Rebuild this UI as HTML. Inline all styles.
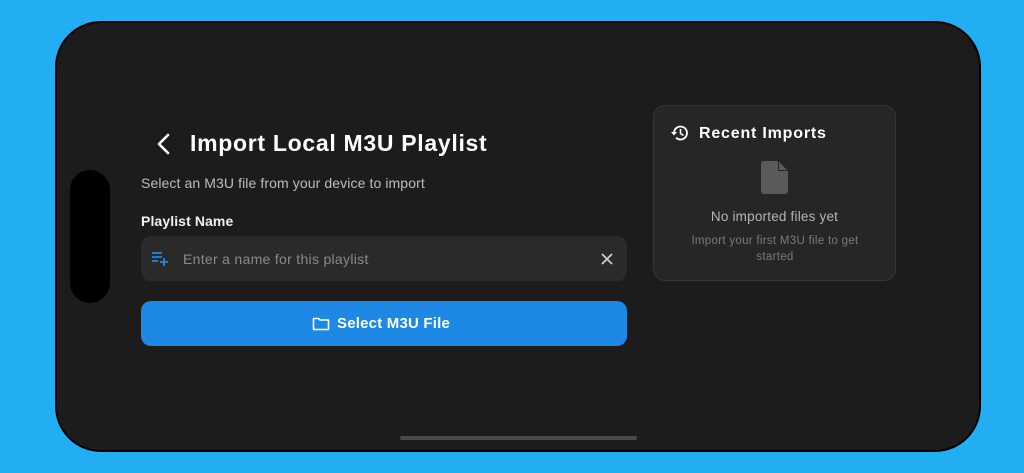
<!DOCTYPE html>
<html><head><style>
*{margin:0;padding:0;box-sizing:border-box}
body{width:1024px;height:473px;background:#21aef2;position:relative;overflow:hidden;font-family:"Liberation Sans",sans-serif}
.phone{position:absolute;left:55px;top:21px;width:926px;height:431px;background:#1c1c1c;border:2px solid #000;border-radius:46px}
.notch{position:absolute;left:70px;top:170px;width:40px;height:133px;background:#000;border-radius:20px}
.home{position:absolute;left:400px;top:436px;width:237px;height:4px;background:#4a4a4a;border-radius:2px}
.t{position:absolute;white-space:nowrap}
.input{position:absolute;left:141px;top:236px;width:486px;height:45px;background:#2a2a2a;border-radius:10px}
.btn{position:absolute;left:141px;top:301px;width:486px;height:45px;background:#1e88e5;border-radius:10px}
.card{position:absolute;left:653px;top:105px;width:243px;height:176px;background:#262626;border:1px solid #363636;border-radius:12px}
</style></head><body>
<div class="phone"></div>
<div class="notch"></div>
<div class="home"></div>
<svg class="t" style="left:154px;top:133px" width="20" height="22" viewBox="0 0 20 22"><path d="M14 2 L5 11 L14 20" stroke="#fff" stroke-width="2.6" fill="none" stroke-linecap="round" stroke-linejoin="round"/></svg>
<div class="t" style="left:190px;top:130px;font-size:23px;font-weight:bold;color:#fff;letter-spacing:0.7px">Import Local M3U Playlist</div>
<div class="t" style="left:141px;top:175px;font-size:14px;color:#bdbdbd;letter-spacing:0.1px">Select an M3U file from your device to import</div>
<div class="t" style="left:141px;top:213px;font-size:14px;color:#f0f0f0;font-weight:bold;letter-spacing:0.1px">Playlist Name</div>
<div class="input"></div>
<svg class="t" style="left:151px;top:251px" width="18" height="16" viewBox="0 0 18 16"><path d="M1 2h10M1 6h10M1 10h6M13 7v8M9 11h8" stroke="#1e88e5" stroke-width="1.8" fill="none"/></svg>
<div class="t" style="left:183px;top:251px;font-size:14px;color:#8a8a8a;letter-spacing:0.3px">Enter a name for this playlist</div>
<svg class="t" style="left:600px;top:252px" width="14" height="14" viewBox="0 0 14 14"><path d="M2 2L12 12M12 2L2 12" stroke="#ccc" stroke-width="1.8"/></svg>
<div class="btn"></div>
<svg class="t" style="left:312px;top:316px" width="18" height="15" viewBox="0 0 18 15"><path d="M1.5 2.5h5l1.5 1.5h8.5v9.5h-15z" stroke="#fff" stroke-width="1.6" fill="none" stroke-linejoin="round"/></svg>
<div class="t" style="left:337px;top:315px;font-size:15px;color:#fff;font-weight:bold;letter-spacing:0.2px">Select M3U File</div>
<div class="card"></div>
<svg class="t" style="left:670px;top:124px" width="19" height="18" viewBox="0 0 19 18"><path d="M4 9a6.5 6.5 0 1 1 2 4.7" stroke="#fff" stroke-width="1.8" fill="none"/><path d="M1 8l3 3.5 3-3.5z" fill="#fff"/><path d="M10.5 5v4.5l3 2" stroke="#fff" stroke-width="1.6" fill="none"/></svg>
<div class="t" style="left:699px;top:125px;font-size:16px;font-weight:bold;color:#fff;letter-spacing:0.8px">Recent Imports</div>
<svg class="t" style="left:761px;top:161px" width="27" height="33" viewBox="0 0 27 33"><path d="M3 0h14l10 10v20a3 3 0 0 1-3 3H3a3 3 0 0 1-3-3V3a3 3 0 0 1 3-3z" fill="#5a5a5a"/><path d="M17 0v10h10" fill="#262626"/><path d="M18 1v8h8z" fill="#5a5a5a"/></svg>
<div class="t" style="left:653px;width:243px;text-align:center;top:209px;font-size:13.5px;color:#b5b5b5;letter-spacing:0.2px">No imported files yet</div>
<div class="t" style="left:675px;width:200px;white-space:normal;text-align:center;top:233px;font-size:11.5px;line-height:16px;color:#7a7a7a;letter-spacing:0.3px">Import your first M3U file to get started</div>
</body></html>
